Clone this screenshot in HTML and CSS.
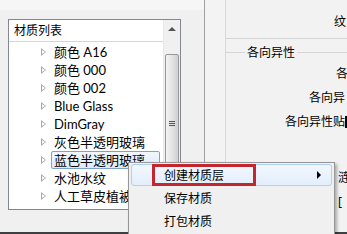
FILE: index.html
```html
<!DOCTYPE html>
<html>
<head>
<meta charset="utf-8">
<link rel="stylesheet" href="styles.css">
</head>
<body>
<div class="main">
  <div class="left">
    <div class="topband"></div>
    <div class="panel">
      <div class="listcol">
        <div class="header">材质列表</div>
        <div class="row"><span class="tri"></span><span class="label">颜色 A16</span></div>
        <div class="row"><span class="tri"></span><span class="label">颜色 000</span></div>
        <div class="row"><span class="tri"></span><span class="label">颜色 002</span></div>
        <div class="row"><span class="tri"></span><span class="label">Blue Glass</span></div>
        <div class="row"><span class="tri"></span><span class="label">DimGray</span></div>
        <div class="row"><span class="tri"></span><span class="label">灰色半透明玻璃</span></div>
        <div class="row"><span class="tri"></span><span class="label sel">蓝色半透明玻璃</span></div>
        <div class="row"><span class="tri"></span><span class="label">水池水纹</span></div>
        <div class="row"><span class="tri"></span><span class="label">人工草皮植被</span></div>
      </div>
      <div class="scroll">
        <div class="arrow-up"></div>
        <div class="thumb"><div class="grip"></div></div>
      </div>
    </div>
  </div>
  <div class="divider"></div>
  <div class="strip"></div>
  <div class="right">
    <div class="t1">纹</div>
    <div class="hline"></div>
    <div class="group"><span class="gl"></span><span class="gt">各向异性</span><span class="gr"></span></div>
    <div class="t2">各</div>
    <div class="t3">各向异</div>
    <div class="t4">各向异性贴<span class="cursor"></span></div>
    <div class="t5">涟</div>
    <div class="t6">[</div>
  </div>
</div>
<div class="bottombar"></div>

<div class="menu">
  <div class="item hot"><span class="mtext">创建材质层</span><span class="sub"></span></div>
  <div class="item"><span class="mtext">保存材质</span></div>
  <div class="item"><span class="mtext">打包材质</span></div>
</div>
<div class="redbox"></div>
</body>
</html>
```
FILE: styles.css
```css
html, body {
  margin: 0;
  padding: 0;
}
body {
  width: 347px;
  height: 234px;
  overflow: hidden;
  position: relative;
  background: #f0f0f0;
  font-family: "Noto Sans", "Noto Sans CJK SC", sans-serif;
  font-size: 12px;
  color: #000;
}
.main {
  display: flex;
  height: 232px;
}
.left {
  width: 204px;
  flex: none;
  display: flex;
  flex-direction: column;
}
.topband {
  height: 10px;
  background: #f6f6f6;
  margin-bottom: 9px;
}
.panel {
  margin-left: 8px;
  width: 171px;
  height: 189px;
  border: 1px solid #828790;
  background: #fff;
  display: flex;
}
.listcol {
  flex: 1;
  display: flex;
  flex-direction: column;
  overflow: hidden;
}
.header {
  height: 21px;
  border-bottom: 1px solid #d5d5d5;
  padding-left: 5px;
  line-height: 21px;
  font-size: 12px;
  margin-bottom: 1px;
}
.row {
  height: 18px;
  display: flex;
  align-items: center;
  padding-left: 32px;
  line-height: 16px;
  font-family: "Lato", "Noto Sans CJK SC", sans-serif;
  font-size: 13px;
}
.tri {
  width: 0;
  height: 0;
  border-left: 5px solid #a6a6a6;
  border-top: 4px solid transparent;
  border-bottom: 4px solid transparent;
  position: relative;
  margin-right: 4px;
}
.tri::after {
  content: "";
  position: absolute;
  left: -4px;
  top: -2px;
  border-left: 3px solid #fff;
  border-top: 2px solid transparent;
  border-bottom: 2px solid transparent;
}
.label {
  padding: 0 2px 0 3px;
  border: 1px solid transparent;
  white-space: nowrap;
}
.sel {
  border: 1px solid #7da2ce;
  border-radius: 2px;
  background: linear-gradient(#f2f7fd, #dfeaf8);
  padding: 0 14px 0 2px;
  margin-left: 1px;
}
.scroll {
  width: 16px;
  flex: none;
  background: #f0f0f0;
  border-left: 1px solid #e8e8e8;
  display: flex;
  flex-direction: column;
  align-items: center;
}
.arrow-up {
  margin-top: 7px;
  width: 0;
  height: 0;
  border-bottom: 4px solid #555;
  border-left: 4px solid transparent;
  border-right: 4px solid transparent;
}
.thumb {
  margin-top: 23px;
  width: 12px;
  height: 136px;
  border: 1px solid #979797;
  border-radius: 2px;
  background: linear-gradient(90deg, #f2f2f2, #e0e0e0 60%, #cfcfcf);
  display: flex;
  align-items: center;
  justify-content: center;
}
.grip {
  width: 6px;
  height: 5px;
  background: repeating-linear-gradient(#555 0 1px, transparent 1px 2px);
}
.divider {
  width: 1px;
  background: #a0a0a0;
  flex: none;
}
.strip {
  width: 20px;
  flex: none;
  background: #f3f3f3;
  border-right: 1px solid #d8d8d8;
}
.right {
  flex: 1;
  background: #f2f2f2;
  position: relative;
  white-space: nowrap;
  overflow: hidden;
}
.t1 {
  margin: 13px 0 0 108px;
  height: 18px;
  line-height: 18px;
}
.hline {
  margin-top: 7px;
  height: 1px;
  background: #d5d5d5;
}
.group {
  margin-top: 6px;
  display: flex;
  align-items: center;
  height: 14px;
}
.gl {
  width: 19px;
  height: 1px;
  background: #d5d5d5;
}
.gt {
  padding: 0 2px;
}
.gr {
  flex: 1;
  height: 1px;
  background: #d5d5d5;
}
.t2 {
  margin: 6px 0 0 110px;
  height: 18px;
  line-height: 18px;
}
.t3 {
  margin: 6px 0 0 83px;
  height: 18px;
  line-height: 18px;
}
.t4 {
  margin: 6px 0 0 59px;
  height: 18px;
  line-height: 18px;
  display: flex;
  align-items: center;
}
.cursor {
  display: inline-block;
  width: 3px;
  height: 12px;
  background: #000;
}
.t5 {
  margin: 38px 0 0 112px;
  height: 18px;
  line-height: 18px;
}
.t6 {
  margin: 6px 0 0 112px;
  height: 18px;
  line-height: 18px;
}
.bottombar {
  height: 2px;
  background: #3c4040;
}
.menu {
  position: absolute;
  left: 128px;
  top: 162px;
  width: 207px;
  height: 72px;
  background: #f0f0f0;
  border: 1px solid #979797;
  border-bottom: none;
  box-shadow: 2px 2px 3px rgba(0,0,0,0.3);
  padding: 1px 2px;
  box-sizing: border-box;
}
.item {
  height: 21px;
  display: flex;
  align-items: center;
  padding-left: 32px;
  position: relative;
  border: 1px solid transparent;
}
.item.hot {
  height: 20px;
  border: 1px solid #aecff7;
  border-radius: 3px;
  background: linear-gradient(#f2f7fe, #e3eefc);
}
.mtext {
  flex: 1;
}
.sub {
  width: 0;
  height: 0;
  border-left: 4px solid #000;
  border-top: 4px solid transparent;
  border-bottom: 4px solid transparent;
  margin-right: 10px;
}
.redbox {
  position: absolute;
  left: 152px;
  top: 164px;
  width: 98px;
  height: 16px;
  border: 3px solid #c1272d;
}
```
